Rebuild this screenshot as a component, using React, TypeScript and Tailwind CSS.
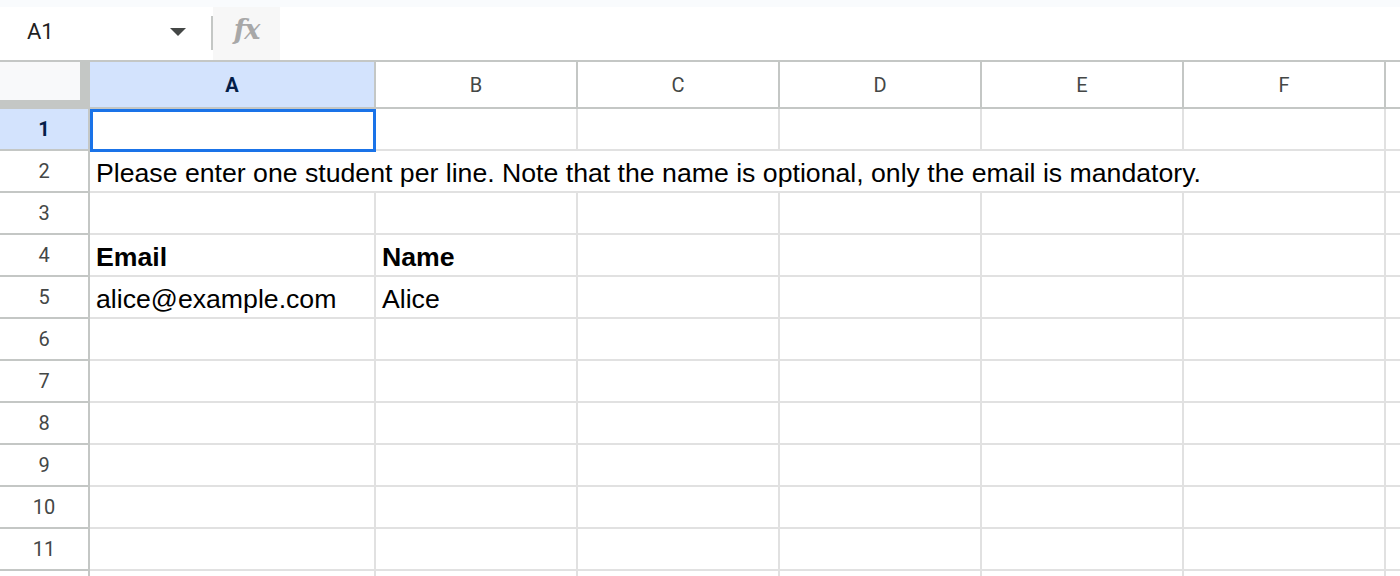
import React from "react";

const COLS = [
  { label: "A", w: 286 },
  { label: "B", w: 202 },
  { label: "C", w: 202 },
  { label: "D", w: 202 },
  { label: "E", w: 202 },
  { label: "F", w: 202 },
];

const hdrFont = { fontFamily: "Roboto, 'Liberation Sans', Arial, sans-serif" };
const cellFont = { fontFamily: "'Liberation Sans', Arial, sans-serif" };

function RowHeader({ n, selected }: { n?: number; selected?: boolean }) {
  return (
    <div
      style={hdrFont}
      className={
        "w-[90px] shrink-0 h-full border-r-2 border-b-2 border-[#c4c7c5] flex items-center justify-center text-[20px] " +
        (selected ? "bg-[#d3e3fd] text-[#041e49] font-bold" : "bg-white text-[#444746]")
      }
    >
      {n}
    </div>
  );
}

function Cell({ w, children, bold, last }: { w?: number; children?: React.ReactNode; bold?: boolean; last?: boolean }) {
  return (
    <div
      style={{ ...cellFont, width: w }}
      className={
        "h-full border-b-2 border-[#e1e1e1] pl-[6px] pt-[7px] leading-[30px] text-[26.67px] text-black whitespace-nowrap overflow-visible " +
        (last ? "flex-1" : "shrink-0 border-r-2") +
        (bold ? " font-bold" : "")
      }
    >
      {children}
    </div>
  );
}

export default function App() {
  const rows: Record<number, string[]> = {
    4: ["Email", "Name"],
    5: ["alice@example.com", "Alice"],
  };
  return (
    <div className="w-[1400px] h-[576px] overflow-hidden bg-white flex flex-col">
      <div className="h-[7px] shrink-0 bg-[#f9fbfd]" />
      <div className="h-[53px] shrink-0 flex items-stretch bg-white">
        <div className="w-[211px] flex items-center relative">
          <span style={hdrFont} className="ml-[27px] text-[22px] text-[#1f1f1f] leading-none -mt-[3px]">
            A1
          </span>
          <svg className="absolute left-[170px] top-[21px]" width="16" height="8" viewBox="0 0 16 8">
            <path d="M0 0 L16 0 L8 8 Z" fill="#444746" />
          </svg>
        </div>
        <div className="w-[2px] mt-[9px] h-[34px] bg-[#c4c7c5]" />
        <div className="w-[67px] bg-[#f7f7f7] flex items-center justify-center">
          <span
            className="italic font-bold text-[27px] text-[#a8a8a8] leading-none -mt-[8px] tracking-[-1px]"
            style={{ fontFamily: "'DejaVu Serif', 'Liberation Serif', serif" }}
          >
            fx
          </span>
        </div>
        <div className="flex-1" />
      </div>

      <div className="border-t-2 border-[#c4c7c5] flex h-[49px] shrink-0">
        <div className="w-[90px] h-[47px] shrink-0 bg-[#c4c7c5]">
          <div className="w-[80px] h-[38px] bg-[#f8f9fa]" />
        </div>
        {COLS.map((c, i) => (
          <div
            key={c.label}
            style={{ ...hdrFont, width: c.w }}
            className={
              "h-[47px] shrink-0 border-r-2 border-b-2 border-[#c4c7c5] flex items-center justify-center text-[20px] " +
              (i === 0 ? "bg-[#d3e3fd] text-[#041e49] font-bold" : "bg-white text-[#444746]")
            }
          >
            {c.label}
          </div>
        ))}
        <div className="flex-1 h-[47px] border-b-2 border-[#c4c7c5]" />
      </div>

      <div className="flex flex-col">
        {Array.from({ length: 12 }, (_, idx) => {
          const n = idx + 1;
          if (n === 2) {
            return (
              <div key={n} className="flex h-[42px] shrink-0">
                <RowHeader n={n} />
                <Cell w={1296}>
                  Please enter one student per line. Note that the name is optional, only the email is mandatory.
                </Cell>
                <Cell last />
              </div>
            );
          }
          const vals = rows[n] || [];
          return (
            <div key={n} className="flex h-[42px] shrink-0">
              <RowHeader n={n <= 11 ? n : undefined} selected={n === 1} />
              {COLS.map((c, i) => (
                <div key={c.label} className="relative shrink-0 h-full" style={{ width: c.w }}>
                  <Cell w={c.w} bold={n === 4}>
                    {vals[i]}
                  </Cell>
                  {n === 1 && i === 0 && (
                    <div className="absolute left-0 top-0 w-[286px] h-[43px] border-[3px] border-[#1a73e8] pointer-events-none" />
                  )}
                </div>
              ))}
              <Cell last />
            </div>
          );
        })}
      </div>
    </div>
  );
}
